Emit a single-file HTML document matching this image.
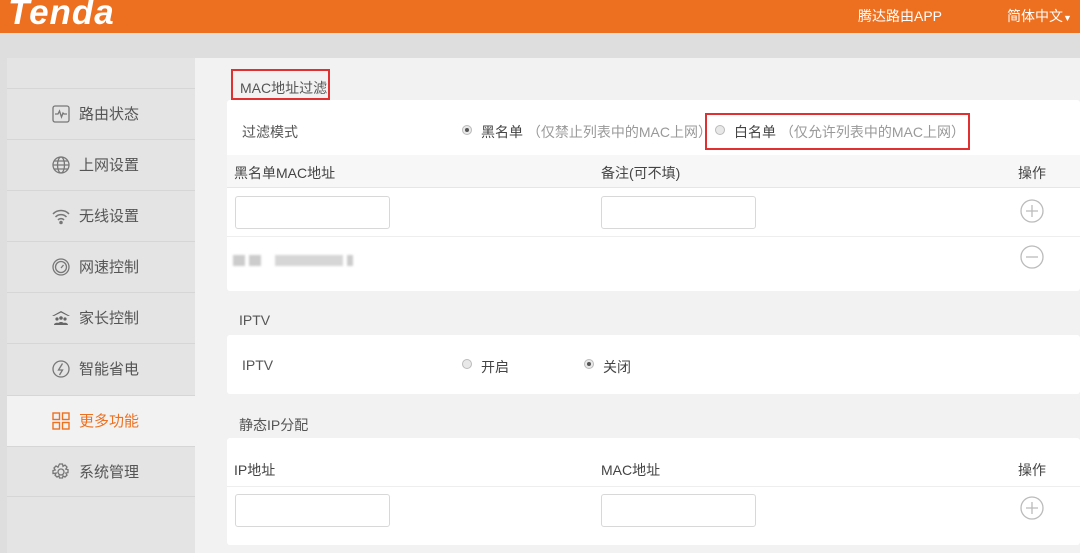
<!DOCTYPE html>
<html><head><meta charset="utf-8"><style>
*{margin:0;padding:0;box-sizing:border-box}
body{width:1080px;height:553px;overflow:hidden;background:#dedede;font-family:"Liberation Sans","Noto Sans CJK SC",sans-serif;font-size:14px;color:#555;position:relative}
.a{position:absolute}
#hd{left:0;top:0;width:1080px;height:33px;background:#ed7020}
#logo{left:8px;top:-7px;color:#fff;font:italic bold 35px "Liberation Sans",sans-serif;letter-spacing:1px}
.ht{color:#fff;font-size:14px;top:6px}
#sb{left:7px;top:58px;width:188px;height:495px;background:#e4e4e4}
.it{left:7px;width:188px;height:51px;border-top:1px solid #d6d6d6;line-height:51px;padding-left:72px;font-size:15px;color:#555}
.ic{position:absolute;left:45px;top:16px;width:18px;height:18px}
#mn{left:195px;top:58px;width:885px;height:495px;background:#f2f2f2}
.card{background:#fff;left:227px;width:853px;border-radius:3px}
.ttl{font-size:14px;color:#555}
.inp{background:#fff;border:1px solid #d8d8d8;border-radius:3px;width:155px;height:33px}
.rd{width:10px;height:10px;border-radius:50%;border:1px solid #bbb;background:#e8e8e8}
.rd.on::after{content:"";position:absolute;left:2px;top:2px;width:4px;height:4px;border-radius:50%;background:#555}
.gr{color:#999}
</style></head><body>
<div class="a" id="hd"></div>
<div class="a" id="logo">Tenda</div>
<div class="a ht" style="left:858px">腾达路由APP</div>
<div class="a ht" style="left:1007px">简体中文<span style="font-size:9px">▼</span></div>
<div class="a" id="sb"></div>
<div class="a it" style="top:88px"><svg class="ic" viewBox="0 0 18 18" fill="none" stroke="#777" stroke-width="1.3"><rect x="1" y="1" width="16" height="16" rx="2"/><path d="M3 9h3l1.5-3 2 6 1.5-4 1 1h3"/></svg>路由状态</div>
<div class="a it" style="top:139px"><svg class="ic" viewBox="0 0 18 18" fill="none" stroke="#777" stroke-width="1.3"><circle cx="9" cy="9" r="8"/><ellipse cx="9" cy="9" rx="3.5" ry="8"/><path d="M1 9h16M2.5 5h13M2.5 13h13"/></svg>上网设置</div>
<div class="a it" style="top:190px"><svg class="ic" viewBox="0 0 18 18" fill="none" stroke="#777" stroke-width="1.5"><path d="M1 7a11 11 0 0 1 16 0M3.5 10a7.5 7.5 0 0 1 11 0M6 13a4 4 0 0 1 6 0"/><circle cx="9" cy="15.5" r="1" fill="#777"/></svg>无线设置</div>
<div class="a it" style="top:241px"><svg class="ic" viewBox="0 0 18 18" fill="none" stroke="#777" stroke-width="1.3"><circle cx="9" cy="9" r="8"/><circle cx="9" cy="9" r="5.5"/><path d="M9 10l2.5-3"/></svg>网速控制</div>
<div class="a it" style="top:292px"><svg class="ic" viewBox="0 0 18 18" fill="#666"><path d="M9 2L0 7h2l7-3.5L16 7h2z"/><circle cx="5" cy="10" r="1.6"/><circle cx="9" cy="9" r="1.8"/><circle cx="13" cy="10" r="1.6"/><path d="M2 16c0-3 6-3 6 0zM5.5 16c0-4 7-4 7 0zM10 16c0-3 6-3 6 0z"/></svg>家长控制</div>
<div class="a it" style="top:343px"><svg class="ic" viewBox="0 0 18 18" fill="none" stroke="#777" stroke-width="1.3"><circle cx="9" cy="9" r="8"/><path d="M10.5 3.5L6.5 10h4l-3 5"/></svg>智能省电</div>
<div class="a it" style="top:395px;background:#f2f2f2;color:#ed7020"><svg class="ic" viewBox="0 0 18 18" fill="none" stroke="#ed7020" stroke-width="1.4"><rect x="1" y="1" width="6.5" height="6.5"/><rect x="10.5" y="1" width="6.5" height="6.5"/><rect x="1" y="10.5" width="6.5" height="6.5"/><rect x="10.5" y="10.5" width="6.5" height="6.5"/></svg>更多功能</div>
<div class="a it" style="top:446px;border-bottom:1px solid #d6d6d6"><svg class="ic" viewBox="0 0 18 18" fill="none" stroke="#777" stroke-width="1.3"><circle cx="9" cy="9" r="3"/><path d="M7.5 1h3l.5 2.3 2-1.2 2 2-1.2 2 2.2.5v3l-2.2.5 1.2 2-2 2-2-1.2-.5 2.1h-3l-.5-2.1-2 1.2-2-2 1.2-2L1 10.5v-3l2.2-.5-1.2-2 2-2 2 1.2z"/></svg>系统管理</div>
<div class="a" id="mn"></div>

<div class="a ttl" style="left:231px;top:69px;width:99px;height:31px;border:2px solid #e03030;padding:7px 0 0 7px">MAC地址过滤</div>
<div class="a card" style="top:100px;height:191px"></div>
<div class="a" style="left:227px;top:155px;width:853px;height:33px;background:#f7f7f7;border-bottom:1px solid #e6e6e6"></div>
<div class="a" style="left:227px;top:236px;width:853px;border-top:1px solid #eee"></div>
<div class="a" style="left:242px;top:122px">过滤模式</div>
<div class="a rd on" style="left:462px;top:125px"></div>
<div class="a" style="left:481px;top:122px;color:#444">黑名单 <span class="gr">（仅禁止列表中的MAC上网）</span></div>
<div class="a" style="left:705px;top:113px;width:265px;height:37px;border:2px solid #e03030"></div>
<div class="a rd" style="left:715px;top:125px"></div>
<div class="a" style="left:734px;top:122px;color:#444">白名单 <span class="gr">（仅允许列表中的MAC上网）</span></div>
<div class="a" style="left:234px;top:163px;color:#444">黑名单MAC地址</div>
<div class="a" style="left:601px;top:163px;color:#444">备注(可不填)</div>
<div class="a" style="left:1018px;top:163px;color:#444">操作</div>
<div class="a inp" style="left:235px;top:196px"></div>
<div class="a inp" style="left:601px;top:196px"></div>
<svg class="a" style="left:1020px;top:199px" width="24" height="24" viewBox="0 0 24 24" fill="none" stroke="#bbb" stroke-width="1.3"><circle cx="12" cy="12" r="11"/><path d="M12 6v12M6 12h12"/></svg>
<svg class="a" style="left:1020px;top:245px" width="24" height="24" viewBox="0 0 24 24" fill="none" stroke="#bbb" stroke-width="1.3"><circle cx="12" cy="12" r="11"/><path d="M6 12h12"/></svg>
<div class="a" style="left:233px;top:255px;width:120px;height:11px;background:linear-gradient(90deg,#ccc 0 12px,#fff 12px 16px,#ccc 16px 28px,#fff 28px 42px,#d6d6d6 42px 110px,#fff 110px 114px,#ccc 114px);filter:blur(1px)"></div>

<div class="a ttl" style="left:239px;top:312px">IPTV</div>
<div class="a card" style="top:335px;height:59px"></div>
<div class="a" style="left:242px;top:357px">IPTV</div>
<div class="a rd" style="left:462px;top:359px"></div>
<div class="a" style="left:481px;top:357px;color:#444">开启</div>
<div class="a rd on" style="left:584px;top:359px"></div>
<div class="a" style="left:603px;top:357px;color:#444">关闭</div>

<div class="a ttl" style="left:239px;top:415px">静态IP分配</div>
<div class="a card" style="top:438px;height:107px"></div>
<div class="a" style="left:227px;top:486px;width:853px;border-top:1px solid #eee"></div>
<div class="a" style="left:234px;top:460px;color:#444">IP地址</div>
<div class="a" style="left:601px;top:460px;color:#444">MAC地址</div>
<div class="a" style="left:1018px;top:460px;color:#444">操作</div>
<div class="a inp" style="left:235px;top:494px"></div>
<div class="a inp" style="left:601px;top:494px"></div>
<svg class="a" style="left:1020px;top:496px" width="24" height="24" viewBox="0 0 24 24" fill="none" stroke="#bbb" stroke-width="1.3"><circle cx="12" cy="12" r="11"/><path d="M12 6v12M6 12h12"/></svg>
</body></html>
